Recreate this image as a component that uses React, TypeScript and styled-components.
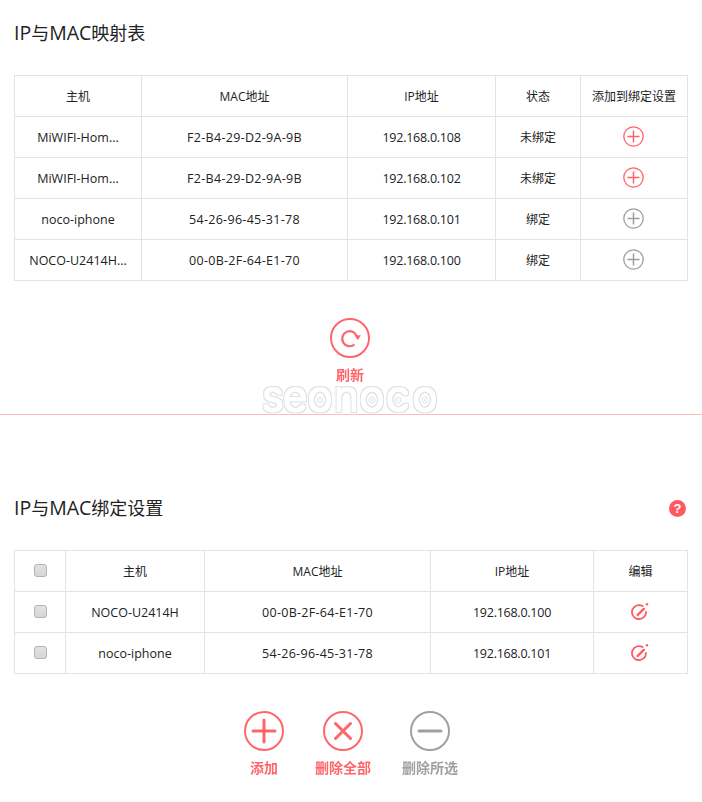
import React, { FC } from 'react';
import styled, { createGlobalStyle } from 'styled-components';

const RED = '#ff5a5f';
const GREY = '#999999';

const GlobalStyle = createGlobalStyle`
  html, body {
    margin: 0;
    padding: 0;
    background: #fff;
  }
  body {
    font-family: "Open Sans", "Noto Sans CJK SC", sans-serif;
    color: #222;
  }
`;

const Page = styled.div`
  width: 702px;
  height: 802px;
  overflow: hidden;
`;

const TopPanel = styled.section`
  position: relative;
  height: 415px;
  padding: 20px 14px 0;
  box-sizing: border-box;
  border-bottom: 1px solid #ffbdbd;
`;

const BottomPanel = styled.section`
  padding: 80px 14px 0;
`;

const TitleRow = styled.div`
  display: flex;
  align-items: center;
  justify-content: space-between;
  height: 26px;
  margin-bottom: 29px;
`;

const Title = styled.h2`
  margin: 0;
  font-size: 18px;
  font-weight: 400;
  line-height: 26px;
  color: #222;
`;

const TitleLatin = styled.span`
  font-size: 19.5px;
`;

const HelpBadge = styled.span`
  display: flex;
  align-items: center;
  justify-content: center;
  width: 17px;
  height: 17px;
  margin-right: 2px;
  border-radius: 50%;
  background: ${RED};
  color: #fff;
  font-family: "Liberation Sans", sans-serif;
  font-size: 13px;
  font-weight: 700;
`;

const Table = styled.table`
  width: 673px;
  table-layout: fixed;
  border-collapse: collapse;
`;

const Cell = styled.td`
  height: 41px;
  padding: 2px 0 0;
  box-sizing: border-box;
  border: 1px solid #e4e4e4;
  text-align: center;
  vertical-align: middle;
  font-size: 12px;
  line-height: 16px;
  white-space: nowrap;
  color: #222;
`;

const Latin = styled.span<{ $spacing?: number }>`
  font-size: 12.5px;
  letter-spacing: ${p => p.$spacing ?? 0}px;
`;

const CenterIcon = styled.span`
  display: flex;
  justify-content: center;
  align-items: center;
  margin: 0 1px 4px 0;
`;

const Check = styled.input.attrs({ type: 'checkbox' })`
  appearance: none;
  display: block;
  width: 13px;
  height: 13px;
  margin: -4px auto 0;
  border: 1px solid #b4b4b4;
  border-radius: 3px;
  background: linear-gradient(#e2e2e2, #d6d6d6);
  box-sizing: border-box;
`;

const Refresh = styled.div`
  display: flex;
  justify-content: center;
  margin-top: 37px;
  margin-right: 2px;
`;

const Actions = styled.div`
  display: flex;
  justify-content: center;
  gap: 31px;
  margin-top: 37px;
`;

const Action = styled.div<{ $color: string }>`
  display: flex;
  flex-direction: column;
  align-items: center;
  gap: 7px;
  min-width: 40px;
  color: ${p => p.$color};
  font-size: 14px;
  font-weight: 700;
  line-height: 20px;
  opacity: 0.92;
`;

const Watermark = styled.svg`
  position: absolute;
  left: 258px;
  top: 380px;
`;

const AddSmall: FC<{ color: string }> = ({ color }) => (
  <svg width="21" height="21" viewBox="0 0 21 21" fill="none" stroke={color} strokeWidth="1.3" opacity="0.95">
    <circle cx="10.5" cy="10.5" r="9.7" />
    <path d="M4.5 10.5H16.5M10.5 4.5V16.5" strokeWidth="1.5" />
  </svg>
);

const EditIcon: FC = () => (
  <svg width="18" height="18" viewBox="0 0 18 18" fill="none" stroke={RED} strokeWidth="1.8" strokeLinecap="round">
    <path d="M11.6 4.1A7 7 0 1 0 15 10" />
    <path d="M6.6 13L12.8 6.9" strokeWidth="2.4" />
    <circle cx="16" cy="2.2" r="1.2" fill={RED} stroke="none" />
  </svg>
);

const RefreshIcon: FC = () => (
  <svg width="40" height="40" viewBox="0 0 40 40" fill="none" stroke={RED} strokeWidth="2">
    <circle cx="20" cy="20" r="19" />
    <path d="M24.5 26.5A7.5 7.5 0 1 1 27 19" strokeWidth="2.2" />
    <path d="M24.6 17.2H30.8L27.9 22.2Z" fill={RED} stroke="none" />
  </svg>
);

const RoundIcon: FC<{ color: string; d: string }> = ({ color, d }) => (
  <svg width="40" height="40" viewBox="0 0 40 40" fill="none" stroke={color} strokeWidth="2">
    <circle cx="20" cy="20" r="19" />
    <path d={d} strokeWidth="3" strokeLinecap="round" />
  </svg>
);

const WatermarkDot: FC<{ cx: number }> = ({ cx }) => (
  <g fill="none" stroke="#e2e2e2">
    <circle cx={cx} cy="20" r="3" />
    <circle cx={cx} cy="20" r="1" fill="#e2e2e2" stroke="none" />
  </g>
);

const mapRows = [
  { host: 'MiWIFI-Hom...', mac: 'F2-B4-29-D2-9A-9B', ip: '192.168.0.108', state: '未绑定', color: RED },
  { host: 'MiWIFI-Hom...', mac: 'F2-B4-29-D2-9A-9B', ip: '192.168.0.102', state: '未绑定', color: RED },
  { host: 'noco-iphone', mac: '54-26-96-45-31-78', ip: '192.168.0.101', state: '绑定', color: GREY },
  { host: 'NOCO-U2414H...', mac: '00-0B-2F-64-E1-70', ip: '192.168.0.100', state: '绑定', color: GREY },
];

const bindRows = [
  { host: 'NOCO-U2414H', mac: '00-0B-2F-64-E1-70', ip: '192.168.0.100' },
  { host: 'noco-iphone', mac: '54-26-96-45-31-78', ip: '192.168.0.101' },
];

const App: FC = () => (
  <Page>
    <GlobalStyle />
    <TopPanel>
      <TitleRow>
        <Title><TitleLatin>IP</TitleLatin>与<TitleLatin>MAC</TitleLatin>映射表</Title>
      </TitleRow>
      <Table>
        <colgroup>
          <col width="127" />
          <col width="206" />
          <col width="148" />
          <col width="85" />
          <col width="107" />
        </colgroup>
        <tbody>
          <tr>
            <Cell>主机</Cell>
            <Cell>MAC地址</Cell>
            <Cell>IP地址</Cell>
            <Cell>状态</Cell>
            <Cell>添加到绑定设置</Cell>
          </tr>
          {mapRows.map(row => (
            <tr key={row.ip}>
              <Cell><Latin>{row.host}</Latin></Cell>
              <Cell><Latin $spacing={0.3}>{row.mac}</Latin></Cell>
              <Cell><Latin $spacing={-0.25}>{row.ip}</Latin></Cell>
              <Cell>{row.state}</Cell>
              <Cell><CenterIcon><AddSmall color={row.color} /></CenterIcon></Cell>
            </tr>
          ))}
        </tbody>
      </Table>
      <Refresh>
        <Action $color={RED}>
          <RefreshIcon />
          <span>刷新</span>
        </Action>
      </Refresh>
      <Watermark width="184" height="36" viewBox="0 0 184 36">
        <defs>
          <filter id="logo-outline" x="0" y="0" width="100%" height="100%">
            <feMorphology in="SourceAlpha" operator="dilate" radius="2" result="outer" />
            <feMorphology in="SourceAlpha" operator="dilate" radius="1" result="inner" />
            <feComposite in="outer" in2="inner" operator="out" result="ring" />
            <feFlood floodColor="#e0e0e0" />
            <feComposite in2="ring" operator="in" />
          </filter>
        </defs>
        <g filter="url(#logo-outline)">
          <rect width="184" height="36" fill="none" />
          <text x="4 25 49.5 76 101.5 128 154.5" y="31" fontFamily="Inter" fontWeight="300" fontSize="42">
            seonoco
          </text>
        </g>
        <WatermarkDot cx={62} />
        <WatermarkDot cx={114} />
        <WatermarkDot cx={140} />
        <WatermarkDot cx={167} />
      </Watermark>
    </TopPanel>
    <BottomPanel>
      <TitleRow>
        <Title><TitleLatin>IP</TitleLatin>与<TitleLatin>MAC</TitleLatin>绑定设置</Title>
        <HelpBadge>?</HelpBadge>
      </TitleRow>
      <Table>
        <colgroup>
          <col width="51" />
          <col width="139" />
          <col width="226" />
          <col width="163" />
          <col width="94" />
        </colgroup>
        <tbody>
          <tr>
            <Cell><Check /></Cell>
            <Cell>主机</Cell>
            <Cell>MAC地址</Cell>
            <Cell>IP地址</Cell>
            <Cell>编辑</Cell>
          </tr>
          {bindRows.map(row => (
            <tr key={row.ip}>
              <Cell><Check /></Cell>
              <Cell><Latin>{row.host}</Latin></Cell>
              <Cell><Latin $spacing={0.3}>{row.mac}</Latin></Cell>
              <Cell><Latin $spacing={-0.25}>{row.ip}</Latin></Cell>
              <Cell><CenterIcon><EditIcon /></CenterIcon></Cell>
            </tr>
          ))}
        </tbody>
      </Table>
      <Actions>
        <Action $color={RED}>
          <RoundIcon color={RED} d="M9 20H31M20 9V31" />
          <span>添加</span>
        </Action>
        <Action $color={RED}>
          <RoundIcon color={RED} d="M12.5 12.5L27.5 27.5M27.5 12.5L12.5 27.5" />
          <span>删除全部</span>
        </Action>
        <Action $color={GREY}>
          <RoundIcon color={GREY} d="M9 20H31" />
          <span>删除所选</span>
        </Action>
      </Actions>
    </BottomPanel>
  </Page>
);

export default App;
